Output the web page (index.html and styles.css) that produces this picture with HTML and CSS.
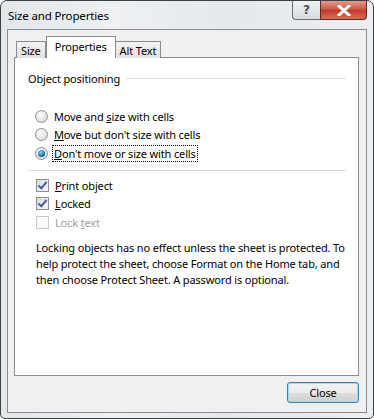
FILE: index.html
```html
<!DOCTYPE html>
<html lang="en">
<head>
  <meta charset="UTF-8">
  <title>Size and Properties</title>
  <link rel="stylesheet" href="styles.css">
</head>
<body>

  <div class="window">
    <div class="titlebar">
      <span class="title">Size and Properties</span>
      <div class="caption-buttons">
        <div class="cap-btn help">?</div>
        <div class="cap-btn close">
          <svg width="14" height="11" viewBox="0 0 14 11">
            <path d="M2 1 L12 10 M12 1 L2 10" stroke="#fff" stroke-width="3" stroke-linecap="square"/>
          </svg>
        </div>
      </div>
    </div>

    <div class="client">
      <div class="tabs">
        <div class="tab">Size</div>
        <div class="tab selected">Properties</div>
        <div class="tab">Alt Text</div>
      </div>

      <div class="panel">
        <div class="group-title">
          <span>Object positioning</span>
          <div class="rule"></div>
        </div>

        <div class="radios">
          <div class="option">
            <span class="radio"></span>
            <span>Move and <u>s</u>ize with cells</span>
          </div>
          <div class="option">
            <span class="radio"></span>
            <span><u>M</u>ove but don't size with cells</span>
          </div>
          <div class="option">
            <span class="radio checked"></span>
            <span class="focus"><u>D</u>on't move or size with cells</span>
          </div>
        </div>

        <div class="separator"></div>

        <div class="checks">
          <div class="option">
            <span class="checkbox checked"></span>
            <span><u>P</u>rint object</span>
          </div>
          <div class="option">
            <span class="checkbox checked"></span>
            <span><u>L</u>ocked</span>
          </div>
          <div class="option disabled">
            <span class="checkbox"></span>
            <span>Lock <u>t</u>ext</span>
          </div>
        </div>

        <p class="note">Locking objects has no effect unless the sheet is protected. To help protect the sheet, choose Format on the Home tab, and then choose Protect Sheet. A password is optional.</p>
      </div>

      <div class="footer">
        <button class="btn">Close</button>
      </div>
    </div>
  </div>

</body>
</html>
```

FILE: styles.css
```css
body {
  margin: 0;
  font-family: "Noto Sans", sans-serif;
  font-size: 11px;
  letter-spacing: -0.15px;
  color: #000;
  background-color: #fff;
}

.window {
  width: 372px;
  height: 417px;
  border: 1px solid #3b3f44;
  border-radius: 7px 7px 5px 5px;
  background: linear-gradient(90deg, #e3e7ea 0%, #eef0f2 30%, #e6e9ec 60%, #eceef0 100%);
  display: flex;
  flex-direction: column;
  overflow: hidden;
}

.titlebar {
  height: 28px;
  display: flex;
  align-items: flex-start;
  padding-right: 6px;
}

.title {
  margin-left: 7px;
  margin-top: 7px;
  font-size: 11.5px;
  color: #000;
}

.caption-buttons {
  margin-left: auto;
  display: flex;
}

.cap-btn {
  height: 18px;
  border: 1px solid #6b6f75;
  border-top: none;
  display: flex;
  align-items: center;
  justify-content: center;
}

.help {
  width: 27px;
  border-radius: 0 0 0 4px;
  border-right: none;
  background: linear-gradient(#f1f3f5, #d6dade);
  color: #4a4f55;
  font-family: "DejaVu Sans", sans-serif;
  font-size: 12px;
  font-weight: bold;
}

.close {
  width: 45px;
  border-radius: 0 0 4px 0;
  border-color: #5e2a24;
  background: linear-gradient(#e19c8b, #c9503c 50%, #bd3a27 51%, #d6705a);
}

.client {
  margin: 0 6px 5px 6px;
  flex: 1;
  border: 1px solid #878a91;
  background-color: #f0f0f0;
  display: flex;
  flex-direction: column;
  padding: 7px 7px 0 6px;
}

.tabs {
  display: flex;
  align-items: flex-end;
  padding-left: 2px;
  height: 21px;
  position: relative;
  z-index: 1;
  margin-bottom: -1px;
}

.tab {
  height: 16px;
  padding: 0 4px 0 4px;
  border: 1px solid #898c95;
  border-bottom: none;
  background: linear-gradient(#f2f2f2, #e3e3e3);
  line-height: 18px;
  box-sizing: content-box;
}

.tab + .tab {
  border-left: none;
}

.tab.selected {
  height: 21px;
  padding: 0 8px;
  background: #fff;
  border-left: 1px solid #898c95;
  line-height: 20px;
}

.tab.selected + .tab {
  border-left: none;
}

.panel {
  height: 305px;
  border: 1px solid #898c95;
  background-color: #fff;
  padding: 12px 12px 0 13px;
}

.group-title {
  display: flex;
  align-items: center;
  gap: 6px;
  height: 17px;
}

.rule {
  flex: 1;
  height: 1px;
  background-color: #d5dfe5;
}

.radios {
  margin-top: 20px;
  margin-left: 7px;
}

.option {
  display: flex;
  align-items: center;
  height: 18px;
  gap: 6px;
  margin-bottom: 0.5px;
}

.radio {
  width: 11px;
  height: 11px;
  border-radius: 50%;
  border: 1px solid #8e8f8f;
  background: radial-gradient(circle at 40% 35%, #fdfdfd, #e0e0e0 70%, #cfcfcf);
  flex-shrink: 0;
  position: relative;
}

.radio.checked::after {
  content: "";
  position: absolute;
  left: 2px;
  top: 2px;
  width: 7px;
  height: 7px;
  border-radius: 50%;
  background: radial-gradient(circle at 40% 35%, #8fd3f7, #1a6fb0 60%, #0c3f78);
}

.focus {
  outline: 1px dotted #000;
  outline-offset: 0;
  padding: 0 1px;
  margin-left: -1px;
  line-height: 15px;
}

.separator {
  height: 1px;
  background-color: #d5dfe5;
  margin-top: 8px;
}

.checks {
  margin-top: 5px;
  margin-left: 8px;
}

.checkbox {
  width: 11px;
  height: 11px;
  border: 1px solid #8e8f8f;
  background: linear-gradient(135deg, #dcdcdc, #f6f6f6);
  flex-shrink: 0;
  position: relative;
}

.checkbox.checked::after {
  content: "";
  position: absolute;
  left: 3px;
  top: 0;
  width: 3px;
  height: 7px;
  border: solid #4a5d9a;
  border-width: 0 2px 2px 0;
  transform: rotate(40deg);
}

.option.disabled {
  color: #a0a0a0;
}

.option.disabled .checkbox {
  border-color: #c8c8c8;
  background: #fafafa;
}

.note {
  margin: 9px 0 0 8px;
  line-height: 16px;
}

.footer {
  display: flex;
  justify-content: flex-end;
  padding-top: 6px;
}

.btn {
  width: 72px;
  height: 21px;
  font-family: inherit;
  font-size: 11px;
  letter-spacing: -0.15px;
  border: 1px solid #3c7fb1;
  border-radius: 3px;
  background: linear-gradient(#f2f2f2 0%, #ebebeb 50%, #dddddd 51%, #cfcfcf 100%);
  box-shadow: inset 0 0 0 1px #9bdcf9;
  padding: 0;
}
```
